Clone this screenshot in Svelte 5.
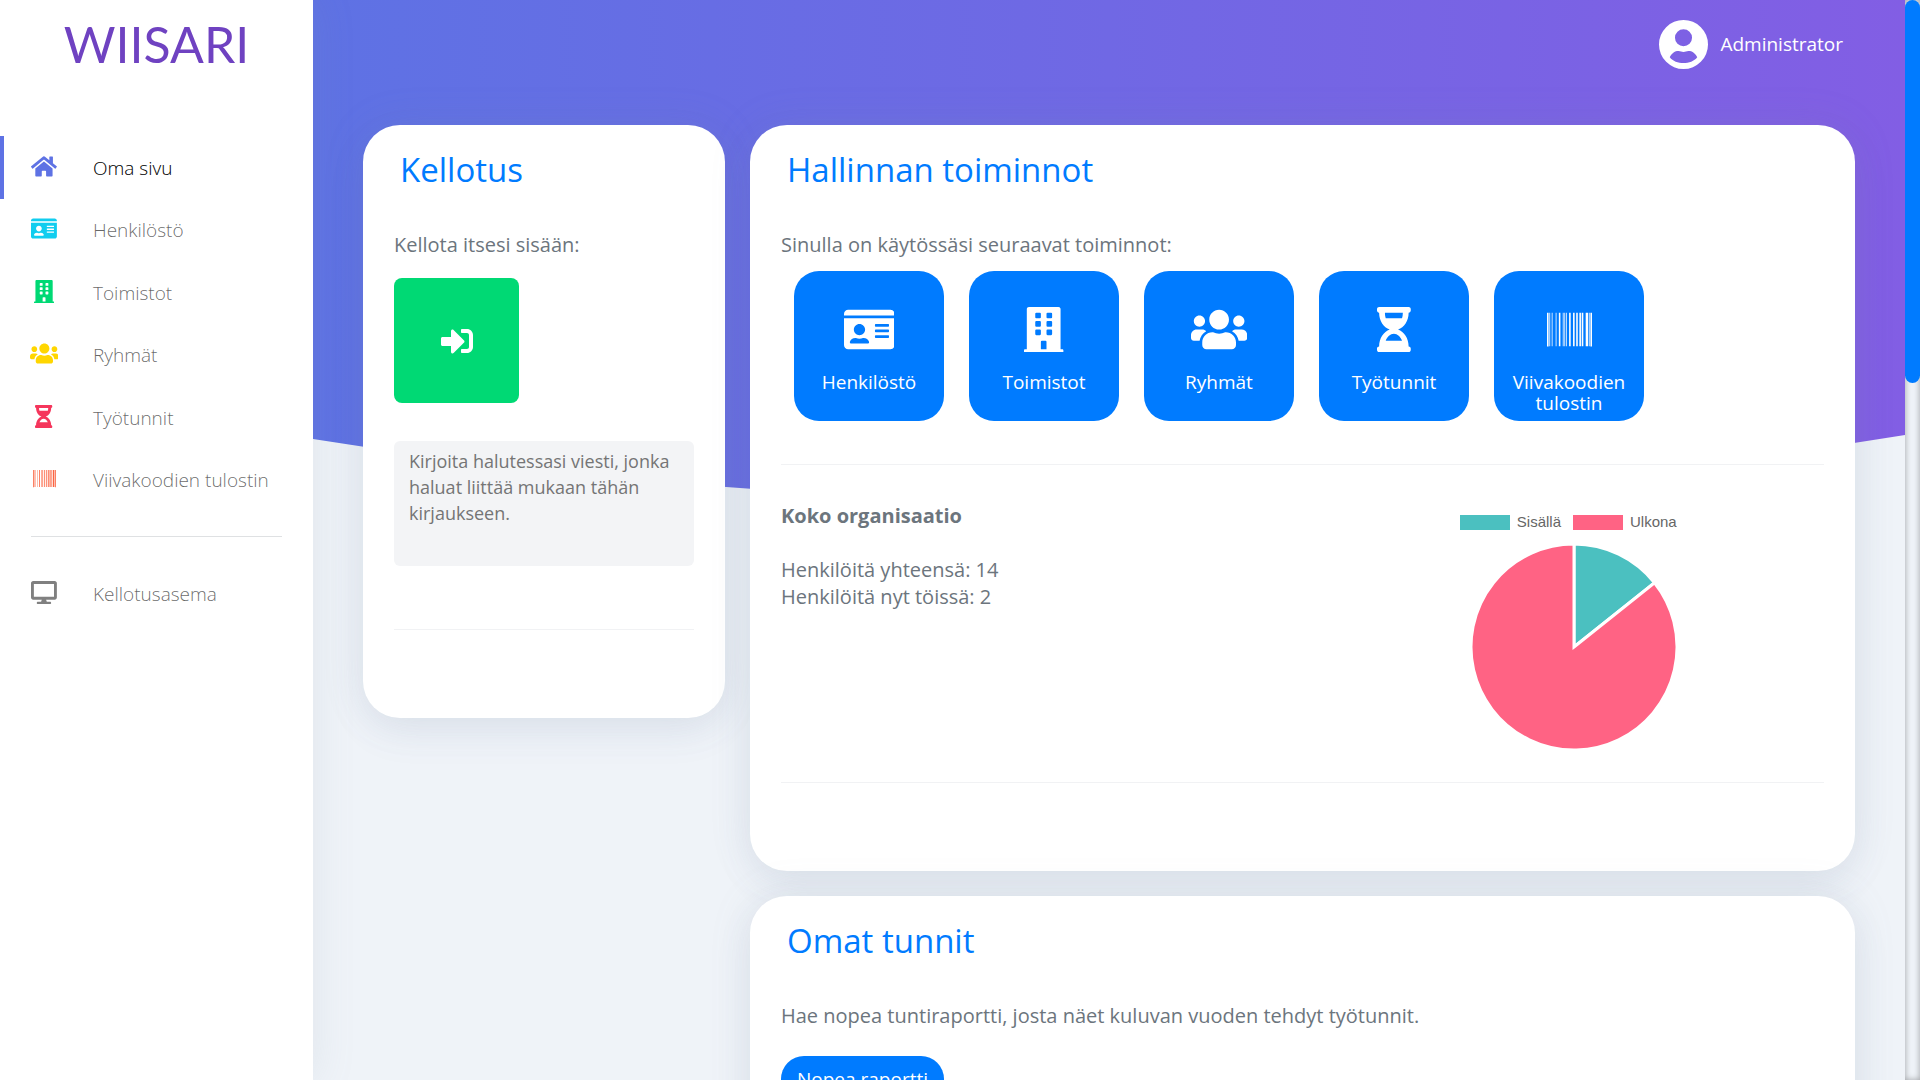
<script>
  const icons = {
    home: {
      w: 576,
      d: 'M280.37 148.26L96 300.11V464a16 16 0 0 0 16 16l112.06-.29a16 16 0 0 0 15.92-16V368a16 16 0 0 1 16-16h64a16 16 0 0 1 16 16v95.64a16 16 0 0 0 16 16.05L464 480a16 16 0 0 0 16-16V300L295.67 148.26a12.19 12.19 0 0 0-15.3 0zM571.6 251.47L488 182.56V44.05a12 12 0 0 0-12-12h-56a12 12 0 0 0-12 12v72.61L318.47 43a48 48 0 0 0-61 0L4.34 251.47a12 12 0 0 0-1.6 16.9l25.5 31A12 12 0 0 0 45.15 301l235.22-193.74a12.19 12.19 0 0 1 15.3 0L530.9 301a12 12 0 0 0 16.9-1.6l25.5-31a12 12 0 0 0-1.7-16.93z'
    },
    card: {
      w: 576,
      d: 'M528 32H48C21.5 32 0 53.5 0 80v16h576V80c0-26.500-21.500-48-48-48zM0 432c0 26.500 21.500 48 48 48h480c26.500 0 48-21.500 48-48V128H0v304zm352-232c0-4.400 3.600-8 8-8h144c4.400 0 8 3.600 8 8v16c0 4.400-3.600 8-8 8H360c-4.400 0-8-3.600-8-8v-16zm0 64c0-4.400 3.600-8 8-8h144c4.400 0 8 3.600 8 8v16c0 4.400-3.600 8-8 8H360c-4.400 0-8-3.600-8-8v-16zm0 64c0-4.400 3.600-8 8-8h144c4.400 0 8 3.600 8 8v16c0 4.400-3.600 8-8 8H360c-4.400 0-8-3.600-8-8v-16zM176 192c35.300 0 64 28.700 64 64s-28.700 64-64 64-64-28.700-64-64 28.700-64 64-64zM67.100 396.200C75.500 370.500 99.600 352 128 352h8.200c12.300 5.100 25.700 8 39.800 8s27.600-2.900 39.800-8h8.200c28.400 0 52.500 18.500 60.900 44.200 3.200 9.900-5.200 19.800-15.600 19.800H82.700c-10.400 0-18.800-10-15.600-19.800z'
    },
    building: {
      w: 448,
      d: 'M436 480h-20V24c0-13.300-10.700-24-24-24H56C42.700 0 32 10.700 32 24v456H12c-6.600 0-12 5.400-12 12v20h448v-20c0-6.600-5.400-12-12-12zM140 64h40q12 0 12 12v40q0 12-12 12h-40q-12 0-12-12V76q0-12 12-12zM268 64h40q12 0 12 12v40q0 12-12 12h-40q-12 0-12-12V76q0-12 12-12zM140 160h40q12 0 12 12v40q0 12-12 12h-40q-12 0-12-12v-40q0-12 12-12zM268 160h40q12 0 12 12v40q0 12-12 12h-40q-12 0-12-12v-40q0-12 12-12zM140 256h40q12 0 12 12v40q0 12-12 12h-40q-12 0-12-12v-40q0-12 12-12zM268 256h40q12 0 12 12v40q0 12-12 12h-40q-12 0-12-12v-40q0-12 12-12zM204 384h40q12 0 12 12v84h-64v-84q0-12 12-12z'
    },
    users: {
      w: 640,
      d: 'M96 224c35.300 0 64-28.700 64-64s-28.700-64-64-64-64 28.700-64 64 28.700 64 64 64zm448 0c35.300 0 64-28.700 64-64s-28.700-64-64-64-64 28.700-64 64 28.700 64 64 64zm32 32h-64c-17.600 0-33.500 7.100-45.100 18.600 40.300 22.100 68.900 62 75.100 109.400h66c17.700 0 32-14.300 32-32v-32c0-35.300-28.700-64-64-64zm-256 0c61.900 0 112-50.100 112-112S381.900 32 320 32 208 82.100 208 144s50.100 112 112 112zm76.800 32h-8.300c-20.800 10-43.900 16-68.500 16s-47.600-6-68.500-16h-8.300C179.600 288 128 339.600 128 403.200V432c0 26.500 21.500 48 48 48h288c26.500 0 48-21.500 48-48v-28.800c0-63.600-51.600-115.200-115.200-115.200zm-223.700-13.400C161.500 263.100 145.600 256 128 256H64c-35.300 0-64 28.700-64 64v32c0 17.700 14.300 32 32 32h65.900c6.300-47.400 34.900-87.300 75.200-109.400z'
    },
    hourglass: {
      w: 384,
      d: 'M360 0H24C10.745 0 0 10.745 0 24v16c0 13.255 10.745 24 24 24 0 90.965 51.016 167.734 120.842 192C75.016 280.266 24 357.035 24 448c-13.255 0-24 10.745-24 24v16c0 13.255 10.745 24 24 24h336c13.255 0 24-10.745 24-24v-16c0-13.255-10.745-24-24-24 0-90.965-51.016-167.734-120.842-192C308.984 231.734 360 154.965 360 64c13.255 0 24-10.745 24-24V24c0-13.255-10.745-24-24-24zm-75.078 384H99.080c17.059-46.797 52.096-80 92.920-80 40.821 0 75.862 33.196 92.922 80zm.019-256H99.078C93.305 108.548 90.019 86.748 90 64h204c-.019 22.747-3.285 44.548-9.059 64z'
    },
    barcode: {
      w: 512,
      d: 'M0 448V64h18v384H0zm26.857-.273V64H36v383.727h-9.143zm27.143 0V64h8.857v383.727H54zm44.857 0V64h8.857v383.727h-8.857zm36 0V64h17.714v383.727h-17.714zm44.857 0V64h8.857v383.727h-8.857zm18 0V64h8.857v383.727h-8.857zm18 0V64h8.857v383.727h-8.857zm35.715 0V64h18v383.727h-18zm44.857 0V64h18v383.727h-18zm35.999 0V64h18.001v383.727h-18.001zm36.001 0V64h18.001v383.727h-18.001zm26.857 0V64h18v383.727h-18zm45.143 0V64h26.857v383.727h-26.857zm35.714 0V64h9.143v383.727H476zm18 .273V64h18v384h-18z'
    },
    desktop: {
      w: 576,
      d: 'M528 0H48C21.500 0 0 21.500 0 48v320c0 26.500 21.500 48 48 48h192l-16 48h-72c-13.300 0-24 10.700-24 24s10.700 24 24 24h272c13.300 0 24-10.700 24-24s-10.700-24-24-24h-72l-16-48h192c26.500 0 48-21.500 48-48V48c0-26.500-21.500-48-48-48zm-16 352H64V64h448v288z'
    },
    signIn: {
      w: 512,
      d: 'M416 448h-84c-6.600 0-12-5.400-12-12v-40c0-6.600 5.400-12 12-12h84c17.700 0 32-14.300 32-32V160c0-17.700-14.300-32-32-32h-84c-6.600 0-12-5.400-12-12V76c0-6.600 5.400-12 12-12h84c53 0 96 43 96 96v192c0 53-43 96-96 96zm-47-201L201 79c-15-15-41-4.500-41 17v96H24c-13.300 0-24 10.700-24 24v96c0 13.300 10.700 24 24 24h136v96c0 21.500 26 32 41 17l168-168c9.300-9.400 9.300-24.600 0-34z'
    }
  };

  const nav = [
    { label: 'Oma sivu', icon: 'home', tone: 'indigo', active: true },
    { label: 'Henkilöstö', icon: 'card', tone: 'cyan' },
    { label: 'Toimistot', icon: 'building', tone: 'green' },
    { label: 'Ryhmät', icon: 'users', tone: 'yellow' },
    { label: 'Työtunnit', icon: 'hourglass', tone: 'red' },
    { label: 'Viivakoodien tulostin', icon: 'barcode', tone: 'orange' }
  ];
  const tiles = nav.slice(1);

  const total = 14;
  const present = 2;
  const angle = (present / total) * 2 * Math.PI;
  const r = 103;
  const px = r * Math.sin(angle);
  const py = -r * Math.cos(angle);
</script>

{#snippet icon(name)}
  <svg class="icon" viewBox="0 0 {icons[name].w} 512" aria-hidden="true">
    <path fill="currentColor" fill-rule="evenodd" d={icons[name].d} />
  </svg>
{/snippet}

<div class="app">
  <aside class="sidebar">
    <a class="brand" href="#home">WIISARI</a>
    <nav>
      <ul class="links">
        {#each nav as item}
          <li>
            <a class="link" class:active={item.active} href="#{item.icon}">
              <span class="link-icon {item.tone}">{@render icon(item.icon)}</span>
              {item.label}
            </a>
          </li>
        {/each}
      </ul>
      <hr class="side-rule" />
      <a class="link station" href="#station">
        <span class="link-icon grey">{@render icon('desktop')}</span>
        Kellotusasema
      </a>
    </nav>
  </aside>

  <main class="main">
    <svg class="backdrop" viewBox="0 0 1592 502" preserveAspectRatio="none" aria-hidden="true">
      <defs>
        <linearGradient id="sky" x1="0" y1="0" x2="1" y2="0">
          <stop offset="0" stop-color="#5e72e4" />
          <stop offset="1" stop-color="#825ee4" />
        </linearGradient>
      </defs>
      <path fill="url(#sky)" d="M0 0H1592V435Q796 565 0 439Z" />
    </svg>

    <header class="topbar">
      <a class="user" href="#profile">
        <svg class="avatar" viewBox="0 0 50 50" aria-hidden="true">
          <path
            fill="#fff"
            fill-rule="evenodd"
            d="M25 0a25 25 0 1 0 0 50a25 25 0 1 0 0-50zM25 9.500a8.700 8.700 0 1 1 0 17.400a8.700 8.700 0 1 1 0-17.400zM11 38c2-4.500 6-6.500 9-6.300c2 .3 3 .9 5 .9s3-.6 5-.9c3-.2 7 1.800 9 6.300c-3 4-8.500 6-14 6s-11-2-14-6z"
          />
        </svg>
        Administrator
      </a>
    </header>

    <div class="columns">
      <section class="card">
        <h2>Kellotus</h2>
        <p class="lead">Kellota itsesi sisään:</p>
        <button class="clock" type="button" aria-label="Kellota sisään">{@render icon('signIn')}</button>
        <textarea
          class="message"
          aria-label="Viesti"
          placeholder="Kirjoita halutessasi viesti, jonka haluat liittää mukaan tähän kirjaukseen."
        ></textarea>
        <hr />
      </section>

      <div class="stack">
        <section class="card">
          <h2>Hallinnan toiminnot</h2>
          <p class="lead">Sinulla on käytössäsi seuraavat toiminnot:</p>
          <div class="tiles">
            {#each tiles as tile}
              <a class="tile" href="#{tile.icon}">
                {@render icon(tile.icon)}
                <span>{tile.label}</span>
              </a>
            {/each}
          </div>
          <hr />
          <div class="summary">
            <div class="counts">
              <h3>Koko organisaatio</h3>
              <p>Henkilöitä yhteensä: {total}<br />Henkilöitä nyt töissä: {present}</p>
            </div>
            <figure class="chart">
              <figcaption>
                <span class="key teal"></span><span>Sisällä</span>
                <span class="key pink"></span><span>Ulkona</span>
              </figcaption>
              <svg class="pie" viewBox="-105 -105 210 210" role="img" aria-label="Sisällä {present}, ulkona {total - present}">
                <g stroke="#fff" stroke-width="3">
                  <path fill="#4bc0c0" d="M0 0V{-r}A{r} {r} 0 0 1 {px} {py}Z" />
                  <path fill="#ff6384" d="M0 0L{px} {py}A{r} {r} 0 1 1 0 {-r}Z" />
                </g>
              </svg>
            </figure>
          </div>
          <hr />
        </section>

        <section class="card">
          <h2>Omat tunnit</h2>
          <p class="lead">Hae nopea tuntiraportti, josta näet kuluvan vuoden tehdyt työtunnit.</p>
          <button class="report" type="button">Nopea raportti</button>
        </section>
      </div>
    </div>
  </main>

  <div class="scrollbar" aria-hidden="true"><div class="thumb"></div></div>
</div>

<style>
  :global(body) {
    margin: 0;
    background: #eff3f8;
  }
  .app {
    display: flex;
    height: 100vh;
    overflow: hidden;
    font-family: 'Open Sans', 'Noto Sans', sans-serif;
    font-size: 20px;
    line-height: 27px;
    color: #6c757d;
  }
  .app :global(*) {
    box-sizing: border-box;
  }
  a {
    color: inherit;
    text-decoration: none;
  }
  .icon {
    display: block;
    height: 23px;
    width: auto;
  }

  /* Sidebar */
  .sidebar {
    position: relative;
    z-index: 1;
    flex: 0 0 313px;
    background: #fff;
    box-shadow: 0 0 40px rgba(136, 152, 170, 0.15);
  }
  .brand {
    display: block;
    height: 136px;
    padding-top: 15px;
    font-family: Lato, sans-serif;
    font-size: 50px;
    line-height: 58px;
    text-align: center;
    color: #6f42c1;
  }
  .links {
    display: grid;
    grid-auto-rows: 1fr;
    min-height: 375px;
    margin: 0;
    padding: 0;
    list-style: none;
  }
  .link {
    display: flex;
    align-items: center;
    height: 100%;
    padding-top: 2px;
    border-left: 4px solid transparent;
    font-size: 19px;
    font-weight: 300;
    color: rgba(0, 0, 0, 0.6);
  }
  .link.active {
    border-color: #5e72e4;
    color: #000;
  }
  .link-icon {
    display: flex;
    justify-content: center;
    width: 80px;
    margin-right: 9px;
    padding-bottom: 4px;
  }
  .indigo { color: #5e72e4; }
  .cyan { color: #11cdef; }
  .green { color: #00d974; }
  .yellow { color: #ffd600; }
  .red { color: #f5365c; }
  .orange { color: #fb6340; }
  .grey { color: #808080; }
  .side-rule {
    margin: 25px 31px;
    border-color: #dfe1e3;
  }
  .station {
    height: 62px;
  }

  /* Main area */
  .main {
    position: relative;
    flex: 1;
    min-width: 0;
  }
  .backdrop {
    position: absolute;
    top: 0;
    left: 0;
    width: 100%;
    height: 502px;
  }
  .topbar {
    position: relative;
    display: flex;
    justify-content: flex-end;
    height: 125px;
    padding: 20px 62px 0 0;
  }
  .user {
    display: flex;
    align-items: center;
    gap: 12px;
    height: 49px;
    font-size: 19px;
    color: #fff;
  }
  .avatar {
    width: 49px;
    height: 49px;
  }
  .columns {
    position: relative;
    display: grid;
    grid-template-columns: minmax(0, 362fr) minmax(0, 1105fr);
    align-items: start;
    gap: 25px;
    padding: 0 50px;
  }
  .stack {
    display: grid;
    gap: 25px;
  }
  .card {
    padding: 20px 31px 88px;
    border-radius: 37px;
    background: #fff;
    box-shadow:
      0 0 40px rgba(136, 152, 170, 0.15),
      0 15px 40px rgba(80, 100, 160, 0.07);
  }
  h2 {
    margin: 0 0 33px;
    padding-left: 6px;
    font-size: 33px;
    font-weight: 400;
    line-height: 50px;
    color: #007bff;
  }
  hr {
    margin: 0;
    border: 0;
    border-top: 1px solid #f1f2f4;
  }
  .lead {
    margin: 0 0 16px;
    line-height: 34px;
  }
  .clock {
    display: flex;
    align-items: center;
    justify-content: center;
    width: 125px;
    height: 125px;
    padding: 0;
    border: 0;
    border-radius: 8px;
    background: #00d974;
    color: #fff;
  }
  .clock .icon {
    height: 32px;
  }
  .message {
    display: block;
    width: 100%;
    height: 125px;
    margin: 38px 0 63px;
    padding: 7px 15px;
    border: 0;
    border-radius: 6px;
    background: #f3f4f6;
    font: inherit;
    font-size: 18px;
    line-height: 26px;
    resize: none;
  }
  .message::placeholder {
    color: #757575;
    opacity: 1;
  }

  .tiles {
    display: flex;
    flex-wrap: wrap;
    gap: 25px;
    margin: -7px 0 43px;
    padding-left: 13px;
  }
  .tile {
    display: flex;
    flex-direction: column;
    align-items: center;
    gap: 20px;
    width: 150px;
    height: 150px;
    padding-top: 36px;
    border-radius: 25px;
    background: #007bff;
    font-size: 19px;
    line-height: 21px;
    text-align: center;
    color: #fff;
  }
  .tile .icon {
    height: 45px;
  }
  .summary {
    display: grid;
    grid-template-columns: 1fr 1fr;
    min-height: 317px;
    padding-top: 37px;
  }
  h3 {
    margin: 0 0 27px;
    font-size: 20px;
    font-weight: 700;
    line-height: 27px;
  }
  .counts p {
    margin: 0;
  }
  .chart {
    display: flex;
    flex-direction: column;
    align-items: center;
    margin: 0;
    padding: 11px 0 0 22px;
  }
  figcaption {
    display: flex;
    align-items: center;
    gap: 7px;
    margin-bottom: 11px;
    padding-right: 12px;
    font-family: 'Liberation Sans', sans-serif;
    font-size: 15px;
    line-height: 18px;
    color: #666;
  }
  .key {
    width: 50px;
    height: 15px;
  }
  .teal { background: #4bc0c0; }
  .pink {
    margin-left: 5px;
    background: #ff6384;
  }
  .pie {
    width: 210px;
    height: 210px;
  }
  .report {
    height: 46px;
    margin-top: 7px;
    padding: 0 16px;
    border: 0;
    border-radius: 23px;
    background: #007bff;
    font: inherit;
    font-size: 19px;
    color: #fff;
  }

  /* Scrollbar */
  .scrollbar {
    flex: 0 0 15px;
    z-index: 1;
    background: #eff3f8;
    box-shadow: inset 0 0 6px rgba(0, 0, 0, 0.35);
  }
  .thumb {
    height: 383px;
    border-radius: 8px;
    background: #007bff;
  }
</style>
